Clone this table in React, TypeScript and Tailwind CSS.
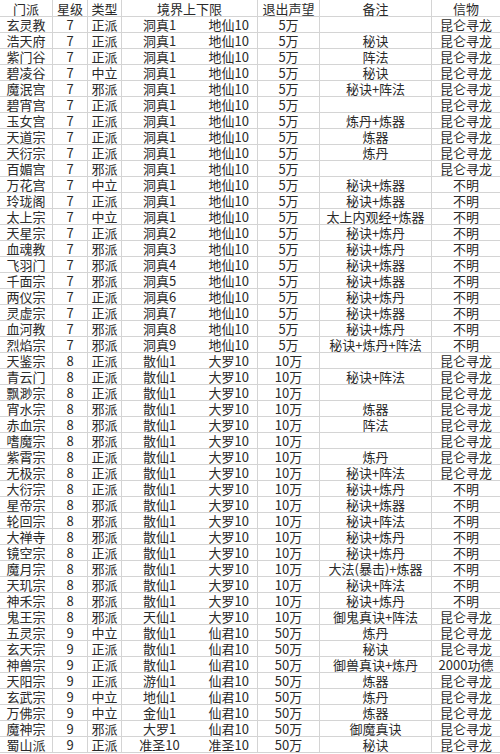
import React from 'react';

type Row = [string, string, string, string, string, string, string, string];

const ROWS: Row[] = [
  ['玄灵教', '7', '正派', '洞真1', '地仙10', '5万', '', '昆仑寻龙'],
  ['浩天府', '7', '正派', '洞真1', '地仙10', '5万', '秘诀', '昆仑寻龙'],
  ['紫门谷', '7', '正派', '洞真1', '地仙10', '5万', '阵法', '昆仑寻龙'],
  ['碧凌谷', '7', '中立', '洞真1', '地仙10', '5万', '秘诀', '昆仑寻龙'],
  ['魔泯宫', '7', '邪派', '洞真1', '地仙10', '5万', '秘诀+阵法', '昆仑寻龙'],
  ['碧宵宫', '7', '正派', '洞真1', '地仙10', '5万', '', '昆仑寻龙'],
  ['玉女宫', '7', '正派', '洞真1', '地仙10', '5万', '炼丹+炼器', '昆仑寻龙'],
  ['天道宗', '7', '正派', '洞真1', '地仙10', '5万', '炼器', '昆仑寻龙'],
  ['天衍宗', '7', '正派', '洞真1', '地仙10', '5万', '炼丹', '昆仑寻龙'],
  ['百媚宫', '7', '邪派', '洞真1', '地仙10', '5万', '', '昆仑寻龙'],
  ['万花宫', '7', '中立', '洞真1', '地仙10', '5万', '秘诀+炼器', '不明'],
  ['玲珑阁', '7', '正派', '洞真1', '地仙10', '5万', '秘诀+炼器', '不明'],
  ['太上宗', '7', '中立', '洞真1', '地仙10', '5万', '太上内观经+炼器', '不明'],
  ['天星宗', '7', '正派', '洞真2', '地仙10', '5万', '秘诀+炼丹', '不明'],
  ['血魂教', '7', '邪派', '洞真3', '地仙10', '5万', '秘诀+炼丹', '不明'],
  ['飞羽门', '7', '邪派', '洞真4', '地仙10', '5万', '秘诀+炼器', '不明'],
  ['千面宗', '7', '邪派', '洞真5', '地仙10', '5万', '秘诀+炼器', '不明'],
  ['两仪宗', '7', '正派', '洞真6', '地仙10', '5万', '秘诀+炼丹', '不明'],
  ['灵虚宗', '7', '正派', '洞真7', '地仙10', '5万', '秘诀+炼器', '不明'],
  ['血河教', '7', '邪派', '洞真8', '地仙10', '5万', '秘诀+炼丹', '不明'],
  ['烈焰宗', '7', '邪派', '洞真9', '地仙10', '5万', '秘诀+炼丹+阵法', '不明'],
  ['天鉴宗', '8', '正派', '散仙1', '大罗10', '10万', '', '昆仑寻龙'],
  ['青云门', '8', '正派', '散仙1', '大罗10', '10万', '秘诀+阵法', '昆仑寻龙'],
  ['飘渺宗', '8', '正派', '散仙1', '大罗10', '10万', '', '昆仑寻龙'],
  ['宵水宗', '8', '邪派', '散仙1', '大罗10', '10万', '炼器', '昆仑寻龙'],
  ['赤血宗', '8', '邪派', '散仙1', '大罗10', '10万', '阵法', '昆仑寻龙'],
  ['嗜魔宗', '8', '邪派', '散仙1', '大罗10', '10万', '', '昆仑寻龙'],
  ['紫霄宗', '8', '正派', '散仙1', '大罗10', '10万', '炼丹', '昆仑寻龙'],
  ['无极宗', '8', '正派', '散仙1', '大罗10', '10万', '秘诀+阵法', '昆仑寻龙'],
  ['大衍宗', '8', '正派', '散仙1', '大罗10', '10万', '秘诀+炼丹', '不明'],
  ['星帝宗', '8', '邪派', '散仙1', '大罗10', '10万', '秘诀+炼器', '不明'],
  ['轮回宗', '8', '邪派', '散仙1', '大罗10', '10万', '秘诀+阵法', '不明'],
  ['大禅寺', '8', '邪派', '散仙1', '大罗10', '10万', '秘诀+炼丹', '不明'],
  ['镜空宗', '8', '正派', '散仙1', '大罗10', '10万', '秘诀+炼丹', '不明'],
  ['魔月宗', '8', '邪派', '散仙1', '大罗10', '10万', '大法(暴击)+炼器', '不明'],
  ['天玑宗', '8', '邪派', '散仙1', '大罗10', '10万', '秘诀+阵法', '不明'],
  ['神禾宗', '8', '邪派', '散仙1', '大罗10', '10万', '秘诀+炼丹', '不明'],
  ['鬼王宗', '8', '邪派', '天仙1', '大罗10', '10万', '御鬼真诀+阵法', '昆仑寻龙'],
  ['五灵宗', '9', '中立', '散仙1', '仙君10', '50万', '炼丹', '昆仑寻龙'],
  ['玄天宗', '9', '正派', '散仙1', '仙君10', '50万', '秘诀', '昆仑寻龙'],
  ['神兽宗', '9', '正派', '散仙1', '仙君10', '50万', '御兽真诀+炼丹', '2000功德'],
  ['天阳宗', '9', '正派', '游仙1', '仙君10', '50万', '炼器', '昆仑寻龙'],
  ['玄武宗', '9', '中立', '地仙1', '仙君10', '50万', '炼丹', '昆仑寻龙'],
  ['万佛宗', '9', '中立', '金仙1', '仙君10', '50万', '炼器', '昆仑寻龙'],
  ['魔神宗', '9', '邪派', '大罗1', '仙君10', '50万', '御魔真诀', '昆仑寻龙'],
  ['蜀山派', '9', '正派', '准圣10', '准圣10', '50万', '秘诀', '昆仑寻龙'],
];

const GRID = 'grid grid-cols-[53px_35px_34px_75px_61px_62px_112px_68px]';
const CELL = 'flex items-center justify-center border-r border-b border-[#d4d4d4] whitespace-nowrap';

export default function App() {
  return (
    <div
      className="w-[500px] h-[754px] overflow-hidden bg-white text-[13px] leading-[15px] text-[#2a2a2a]"
      style={{ fontFamily: '"Noto Sans CJK SC", "Liberation Sans", sans-serif' }}
    >
      {/* Header */}
      <div className={`${GRID} h-[17px]`}>
        <div className={CELL}>门派</div>
        <div className={CELL}>星级</div>
        <div className={CELL}>类型</div>
        <div className={`${CELL} col-span-2`}>境界上下限</div>
        <div className={CELL}>退出声望</div>
        <div className={CELL}>备注</div>
        <div className={`${CELL} border-r-0`}>信物</div>
      </div>

      {/* Rows */}
      {ROWS.map((r) => (
        <div key={r[0]} className={`${GRID} h-[16px]`}>
          <div className={CELL}>{r[0]}</div>
          <div className={CELL}>{r[1]}</div>
          <div className={CELL}>{r[2]}</div>
          <div className={`${CELL} border-r-0`}>{r[3]}</div>
          <div className={`${CELL} justify-end pr-[8px]`}>{r[4]}</div>
          <div className={CELL}>{r[5]}</div>
          <div className={CELL}>{r[6]}</div>
          <div className={`${CELL} border-r-0`}>{r[7]}</div>
        </div>
      ))}
    </div>
  );
}
